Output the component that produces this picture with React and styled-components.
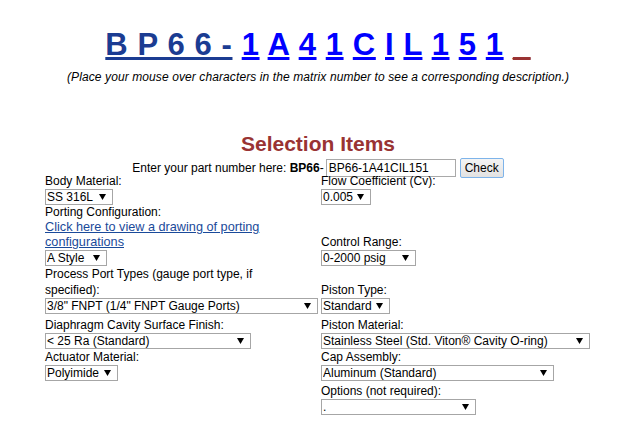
import React from 'react';
import styled, { createGlobalStyle } from 'styled-components';

const Global = createGlobalStyle`
  html, body { background: #fff; }
  body {
    margin: 8px;
    font-family: Arial, "Liberation Sans", sans-serif;
    font-size: 12px;
    color: #000;
  }
`;

const Page = styled.div`
  width: 620px;
`;

const Matrix = styled.div`
  text-align: center;
  font-family: Arial, "Liberation Sans", sans-serif;
  font-weight: bold;
  font-size: 31px;
  line-height: 34px;
  letter-spacing: 0.6px;
  padding-top: 20px;
  white-space: pre;
`;

const tones = { base: '#1b3c92', digit: '#0000ff', blank: '#993333' };

const Code = styled.a`
  color: ${(p) => tones[p.$tone]};
  text-decoration: underline;
  cursor: pointer;
`;

const Hint = styled.p`
  margin: 8px 0 0;
  text-align: center;
  font-style: italic;
  font-size: 12px;
  letter-spacing: 0.1px;
  line-height: 14px;
`;

const Heading = styled.h2`
  margin: 48px 0 0;
  text-align: center;
  font-size: 21px;
  line-height: 24px;
  font-weight: bold;
  color: #993333;
`;

const EnterRow = styled.div`
  margin-top: 6px;
  height: 12px;
  line-height: 12px;
  display: flex;
  align-items: center;
  justify-content: center;
  white-space: pre;
`;

const PartInput = styled.input`
  box-sizing: border-box;
  width: 130px;
  height: 18px;
  margin: 0 0 0 2px;
  padding: 0 2px;
  border: 1px solid #a9a9a9;
  font-family: Arial, "Liberation Sans", sans-serif;
  font-size: 12px;
  color: #000;
  background: #fff;
  outline: none;
`;

const CheckButton = styled.button`
  box-sizing: border-box;
  width: 44px;
  height: 20px;
  margin-left: 4px;
  padding: 0;
  border: 1px solid #7eb4ea;
  border-radius: 2px;
  background: linear-gradient(#f4f4f4, #e2e2e2);
  font-family: Arial, "Liberation Sans", sans-serif;
  font-size: 12px;
  color: #000;
`;

const Form = styled.div`
  margin-left: 37px;
  width: 546px;
`;

const Row = styled.div`
  display: grid;
  grid-template-columns: 276px 1fr;
  align-items: end;
  margin-top: ${(p) => p.$mt || 0}px;
`;

const Cell = styled.div`
  display: flex;
  flex-direction: column;
  align-items: flex-start;
`;

const Label = styled.div`
  line-height: 15px;
  white-space: nowrap;
`;

const WrapLabel = styled.div`
  line-height: 16px;
  width: 250px;
`;

const DrawingLink = styled.a`
  color: #1a4a9a;
  text-decoration: underline;
  font-size: 12.7px;
  line-height: 15px;
  width: 260px;
  display: block;
  cursor: pointer;
`;

const SelectWrap = styled.span`
  position: relative;
  display: inline-block;
  width: ${(p) => p.$w}px;
  height: 16px;
`;

const NativeSelect = styled.select`
  appearance: none;
  -webkit-appearance: none;
  box-sizing: border-box;
  width: 100%;
  height: 100%;
  margin: 0;
  padding: 0 0 0 1px;
  border: 1px solid #a6a6a6;
  border-radius: 0;
  background: #fff;
  font-family: Arial, "Liberation Sans", sans-serif;
  font-size: 12px;
  line-height: 14px;
  color: #000;
  outline: none;
`;

const Arrow = styled.svg`
  position: absolute;
  right: 7px;
  top: 5px;
  pointer-events: none;
`;

function Dropdown({ w, value }) {
  return (
    <SelectWrap $w={w}>
      <NativeSelect defaultValue={value}>
        <option value={value}>{value}</option>
      </NativeSelect>
      <Arrow width="7" height="6" viewBox="0 0 7 6">
        <polygon points="0,0 7,0 3.5,6" fill="#000" />
      </Arrow>
    </SelectWrap>
  );
}

const codeChars = ['1', 'A', '4', '1', 'C', 'I', 'L', '1', '5', '1'];

export default function App() {
  return (
    <Page>
      <Global />
      <Matrix>
        <Code $tone="base">B P 6 6 -</Code>
        {codeChars.map((c, i) => (
          <React.Fragment key={i}>
            {' '}
            <Code $tone="digit">{c}</Code>
          </React.Fragment>
        ))}
        {' '}
        <Code $tone="blank">_</Code>
      </Matrix>
      <Hint>(Place your mouse over characters in the matrix number to see a corresponding description.)</Hint>
      <Heading>Selection Items</Heading>
      <EnterRow>
        Enter your part number here: <b>BP66</b>-
        <PartInput defaultValue="BP66-1A41CIL151" />
        <CheckButton>Check</CheckButton>
      </EnterRow>
      <Form>
        <Row>
          <Cell>
            <Label>Body Material:</Label>
            <Dropdown w={68} value="SS 316L" />
          </Cell>
          <Cell>
            <Label>Flow Coefficient (Cv):</Label>
            <Dropdown w={50} value="0.005" />
          </Cell>
        </Row>
        <Row>
          <Cell>
            <Label>Porting Configuration:</Label>
            <DrawingLink>Click here to view a drawing of porting configurations</DrawingLink>
            <Dropdown w={62} value="A Style" />
          </Cell>
          <Cell>
            <Label>Control Range:</Label>
            <Dropdown w={95} value="0-2000 psig" />
          </Cell>
        </Row>
        <Row>
          <Cell>
            <WrapLabel>Process Port Types (gauge port type, if specified):</WrapLabel>
            <Dropdown w={273} value={'3/8" FNPT (1/4" FNPT Gauge Ports)'} />
          </Cell>
          <Cell>
            <Label>Piston Type:</Label>
            <Dropdown w={69} value="Standard" />
          </Cell>
        </Row>
        <Row $mt={4}>
          <Cell>
            <Label>Diaphragm Cavity Surface Finish:</Label>
            <Dropdown w={206} value="< 25 Ra (Standard)" />
          </Cell>
          <Cell>
            <Label>Piston Material:</Label>
            <Dropdown w={269} value="Stainless Steel (Std. Viton® Cavity O-ring)" />
          </Cell>
        </Row>
        <Row $mt={1}>
          <Cell>
            <Label>Actuator Material:</Label>
            <Dropdown w={73} value="Polyimide" />
          </Cell>
          <Cell>
            <Label>Cap Assembly:</Label>
            <Dropdown w={233} value="Aluminum (Standard)" />
          </Cell>
        </Row>
        <Row $mt={3}>
          <Cell />
          <Cell>
            <Label>Options (not required):</Label>
            <Dropdown w={155} value="." />
          </Cell>
        </Row>
      </Form>
    </Page>
  );
}
